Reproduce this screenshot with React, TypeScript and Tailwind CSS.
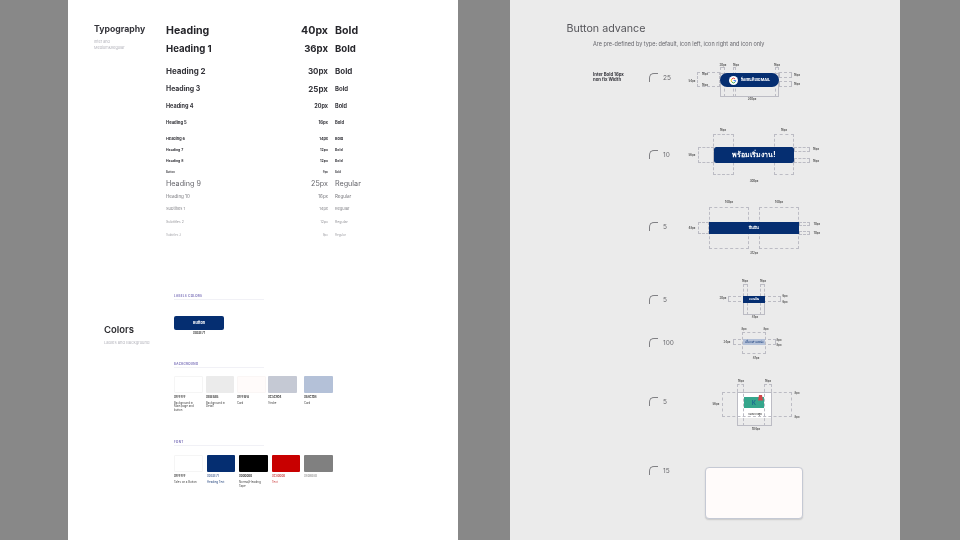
import type { ReactNode } from "react";

const inter = { fontFamily: "Inter, 'Noto Sans', sans-serif" };

type TypeRow = {
	name: string;
	size: string;
	weight: string;
	gap: number;
	text: string;
	sizeText?: string;
	weightText?: string;
};

const typeRows: TypeRow[] = [
	{ name: "Heading", size: "40px", weight: "Bold", gap: 4, text: "text-[10.6px] font-bold text-[#26262b]" },
	{ name: "Heading 1", size: "36px", weight: "Bold", gap: 6, text: "text-[9.6px] font-bold text-[#26262b]" },
	{ name: "Heading 2", size: "30px", weight: "Bold", gap: 10, text: "text-[8px] font-bold text-[#34343a]" },
	{ name: "Heading 3", size: "25px", weight: "Bold", gap: 6, text: "text-[6.9px] font-bold text-[#34343a]", sizeText: "text-[8px]", weightText: "text-[6px]" },
	{ name: "Heading 4", size: "20px", weight: "Bold", gap: 6, text: "text-[5.5px] font-bold text-[#34343a]" },
	{ name: "Heading 5", size: "16px", weight: "Bold", gap: 4, text: "text-[4.2px] font-bold text-[#34343a]" },
	{ name: "Heading 6", size: "14px", weight: "Bold", gap: 4, text: "text-[3.8px] font-bold text-[#34343a]" },
	{ name: "Heading 7", size: "12px", weight: "Bold", gap: -0.5, text: "text-[3.5px] font-bold text-[#34343a]" },
	{ name: "Heading 8", size: "12px", weight: "Bold", gap: -0.5, text: "text-[3.5px] font-bold text-[#34343a]" },
	{ name: "Button", size: "9px", weight: "Bold", gap: -2, text: "text-[2.8px] font-bold text-[#44444a]" },
	{ name: "Heading 9", size: "25px", weight: "Regular", gap: 0, text: "text-[7.2px] text-[#66666c]" },
	{ name: "Heading 10", size: "16px", weight: "Regular", gap: 1, text: "text-[4.5px] text-[#77777c]" },
	{ name: "Subtitles 1", size: "14px", weight: "Regular", gap: 0, text: "text-[4px] text-[#85858a]" },
	{ name: "Subtitles 2", size: "12px", weight: "Regular", gap: 1.5, text: "text-[3.6px] text-[#97979c]" },
	{ name: "Subtitles 3", size: "9px", weight: "Regular", gap: 0.5, text: "text-[3px] text-[#a5a5aa]" },
];

type Swatch = {
	color: string;
	hex: string;
	hexColor?: string;
	desc: string[];
	descColor?: string;
	width: string;
	gap: string;
};

const backgrounds: Swatch[] = [
	{ color: "bg-white border border-[#f5f5f5]", hex: "#FFFFFF", desc: ["Background in", "Main page and", "button"], width: "w-[29px]", gap: "mr-[3px]" },
	{ color: "bg-[#EBEBEB]", hex: "#EBEBEB", desc: ["Background in", "Detail"], width: "w-[28px]", gap: "mr-[3px]" },
	{ color: "bg-[#FFFBFA] border border-[#faf6f5]", hex: "#FFFBFA", desc: ["Card"], width: "w-[29px]", gap: "mr-[2px]" },
	{ color: "bg-[#C5C9D4]", hex: "#C5C9D4", desc: ["Stroke"], width: "w-[29px]", gap: "mr-[7px]" },
	{ color: "bg-[#B4C1D8]", hex: "#B4C1D8", desc: ["Card"], width: "w-[29px]", gap: "" },
];

const fonts: Swatch[] = [
	{ color: "bg-white border border-[#f5f5f5]", hex: "#FFFFFF", desc: ["Tales on a Button"], width: "w-[29px]", gap: "mr-[4px]" },
	{ color: "bg-[#052E71]", hex: "#052E71", hexColor: "text-[#5a72a0]", desc: ["Heading Text"], descColor: "text-[#2a4a80]", width: "w-[28px]", gap: "mr-[4px]" },
	{ color: "bg-black", hex: "#000000", desc: ["Normal/Heading", "Tape"], width: "w-[29px]", gap: "mr-[4px]" },
	{ color: "bg-[#C80000]", hex: "#C80000", hexColor: "text-[#d05050]", desc: ["Text"], descColor: "text-[#c83030]", width: "w-[28px]", gap: "mr-[4px]" },
	{ color: "bg-[#808080]", hex: "#808080", hexColor: "text-[#a0a0a0]", desc: [], width: "w-[29px]", gap: "" },
];

function SwatchRow({ items }: { items: Swatch[] }) {
	return (
		<div className="flex">
			{items.map((item) => (
				<div key={item.hex} className={`${item.width} ${item.gap}`}>
					<div className={`h-[17px] rounded-[1px] ${item.color}`} />
					<div className={`mt-[2px] text-[2.8px] font-bold leading-[4px] ${item.hexColor ?? "text-[#333]"}`}>
						{item.hex}
					</div>
					<div className={`mt-[3px] text-[2.8px] leading-[3.4px] ${item.descColor ?? "text-[#444]"}`}>
						{item.desc.map((line) => (
							<div key={line}>{line}</div>
						))}
					</div>
				</div>
			))}
		</div>
	);
}

function SectionLabel({ children }: { children: string }) {
	return (
		<div className="w-[90px] border-b border-[#f1f1f6] pb-[1px] text-[3px] font-semibold leading-[4px] tracking-[0.3px] text-[#6a5fb0]">
			{children}
		</div>
	);
}

function TypographyBlock() {
	return (
		<div className="flex h-[292px] shrink-0 pl-[26px] pt-[21px]">
			<div className="w-[72px]">
				<div className="text-[8.7px] font-bold leading-[16px] text-[#34343a]">Typography</div>
				<div className="mt-[2px] text-[3.8px] leading-[6px] text-[#b4b4bc]">
					Inter and
					<br />
					Medium&Regular
				</div>
			</div>
			<div className="w-[200px]">
				{typeRows.map((row) => (
					<div
						key={row.name}
						className={`flex h-[12px] items-center whitespace-nowrap leading-none ${row.text}`}
						style={{ marginTop: row.gap }}
					>
						<span className="w-[110px]">{row.name}</span>
						<span className={`w-[52px] text-right ${row.sizeText ?? ""}`}>{row.size}</span>
						<span className={`ml-[7px] ${row.weightText ?? ""}`}>{row.weight}</span>
					</div>
				))}
			</div>
		</div>
	);
}

function ColorsBlock() {
	return (
		<div className="flex pt-[2px]">
			<div className="w-[106px] pl-[36px] pt-[30px]">
				<div className="text-[9.5px] font-semibold leading-[12px] text-[#2c2c30]">Colors</div>
				<div className="mt-[4px] whitespace-nowrap text-[4.1px] leading-[6px] text-[#b4b4bc]">Lables and Background</div>
			</div>
			<div className="w-[165px]">
				<SectionLabel>LABELS COLORS</SectionLabel>
				<div className="mt-[16px] flex h-[14px] w-[50px] items-center justify-center rounded-[2px] bg-[#052E71] text-[3.8px] font-bold text-white">
					Button
				</div>
				<div className="mt-[1px] w-[50px] text-center text-[2.8px] font-bold leading-[4px] text-[#333]">#052E71</div>
				<div className="mt-[27px]">
					<SectionLabel>BACKGROUND</SectionLabel>
				</div>
				<div className="mt-[8px]">
					<SwatchRow items={backgrounds} />
				</div>
				<div className="mt-[28px]">
					<SectionLabel>FONT</SectionLabel>
				</div>
				<div className="mt-[9px]">
					<SwatchRow items={fonts} />
				</div>
			</div>
		</div>
	);
}

// annotation marks on the spec canvas, x/y are read straight off the artboard
function Box({ x, y, w, h, solid }: { x: number; y: number; w: number; h: number; solid?: boolean }) {
	return (
		<div
			className={`absolute border-[0.5px] border-[#bcbcc4] ${solid ? "" : "border-dashed"}`}
			style={{ left: x - 510, top: y, width: w, height: h }}
		/>
	);
}

function Dim({ x, y, children }: { x: number; y: number; children: string }) {
	return (
		<span
			className="absolute -translate-x-1/2 -translate-y-1/2 whitespace-nowrap text-[2.8px] font-semibold text-[#444]"
			style={{ left: x - 510, top: y }}
		>
			{children}
		</span>
	);
}

function Btn({ x, y, w, h, className, children }: { x: number; y: number; w: number; h: number; className: string; children: ReactNode }) {
	return (
		<div
			className={`absolute flex items-center justify-center whitespace-nowrap ${className}`}
			style={{ left: x - 510, top: y, width: w, height: h }}
		>
			{children}
		</div>
	);
}

function SpecRow({ top, height, radius, note, children }: { top: number; height: number; radius: string; note?: ReactNode; children: ReactNode }) {
	return (
		<div className="relative flex items-start pl-[83px]" style={{ height }}>
			<div className="-mt-[1px] w-[55.5px] shrink-0 text-[4.3px] font-bold leading-[5px] text-[#33333a]">{note}</div>
			<div className="h-[9px] w-[9px] shrink-0 rounded-tl-[5px] border-l border-t border-[#808084]" />
			<span className="ml-[5.5px] text-[6.5px] leading-[11px] text-[#6a6a6e]">{radius}</span>
			{/* shift the canvas layer back so children can use artboard coordinates */}
			<div className="absolute left-0 w-full" style={{ top: -top }}>
				{children}
			</div>
		</div>
	);
}

function GoogleMark() {
	return (
		<svg viewBox="0 0 24 24" className="h-[9px] w-[9px]">
			<circle cx="12" cy="12" r="12" fill="#fff" />
			<path d="M7.2 8.4A6 6 0 0 1 16.2 7.7" fill="none" stroke="#ea4335" strokeWidth="2.6" />
			<path d="M7.2 15.6a6 6 0 0 1 0-7.2" fill="none" stroke="#fbbc05" strokeWidth="2.6" />
			<path d="M16.5 16a6 6 0 0 1-9.3-.4" fill="none" stroke="#34a853" strokeWidth="2.6" />
			<path d="M12 12h6a6 6 0 0 1-1.5 4" fill="none" stroke="#4285f4" strokeWidth="2.6" />
		</svg>
	);
}

function SpecPanel() {
	return (
		<section className="h-full w-[390px] shrink-0 bg-[#EBEBEB]">
			<div className="h-[73px]">
				<div className="pl-[56.5px] pt-[21px] text-[10.7px] leading-[16px] text-[#55555a]">Button advance</div>
				<div className="pl-[83px] pt-[3.5px] text-[5.5px] leading-[7px] text-[#66666c]">
					Are pre-defined by type: default, icon left, icon right and icon only
				</div>
			</div>

			<SpecRow
				top={73}
				height={77}
				radius="25"
				note={
					<>
						Inter Bold 16px
						<br />
						non fix Width
					</>
				}
			>
				<Box x={697} y={72} w={23} h={15} />
				<Box x={720} y={67} w={5} h={30} />
				<Box x={733} y={67} w={3} h={30} />
				<Box x={775} y={67} w={4} h={30} />
				<Box x={720} y={73} w={59} h={24} solid />
				<Box x={779} y={72} w={13} h={6} />
				<Box x={779} y={81} w={13} h={6} />
				<Btn x={720} y={73} w={59} h={14} className="gap-[3px] rounded-[7px] bg-[#052E71] text-[3.8px] font-bold text-white">
					<GoogleMark />
					<span>ล็อกอินด้วยGMAIL</span>
				</Btn>
				<Dim x={723} y={65}>20px</Dim>
				<Dim x={736} y={65}>16px</Dim>
				<Dim x={777} y={65}>16px</Dim>
				<Dim x={692} y={81}>54px</Dim>
				<Dim x={705} y={74}>16px</Dim>
				<Dim x={705} y={85}>16px</Dim>
				<Dim x={797} y={75}>16px</Dim>
				<Dim x={797} y={84}>16px</Dim>
				<Dim x={752} y={99}>240px</Dim>
			</SpecRow>

			<SpecRow top={150} height={72} radius="10">
				<Box x={698} y={147} w={16} h={16} />
				<Box x={713} y={134} w={21} h={41} />
				<Box x={774} y={134} w={20} h={41} />
				<Box x={794} y={147} w={16} h={5} />
				<Box x={794} y={158} w={16} h={5} />
				<Btn x={714} y={147} w={80} h={16} className="rounded-[2.5px] bg-[#052E71] text-[7px] font-bold text-white">
					พร้อมเริ่มงาน!
				</Btn>
				<Dim x={723} y={130}>16px</Dim>
				<Dim x={784} y={130}>16px</Dim>
				<Dim x={692} y={155}>56px</Dim>
				<Dim x={816} y={149}>16px</Dim>
				<Dim x={816} y={161}>16px</Dim>
				<Dim x={754} y={181}>300px</Dim>
			</SpecRow>

			<SpecRow top={222} height={73} radius="5">
				<Box x={698} y={222} w={11} h={12} />
				<Box x={709} y={207} w={40} h={42} />
				<Box x={759} y={207} w={40} h={42} />
				<Box x={799} y={222} w={11} h={4} />
				<Box x={799} y={231} w={11} h={4} />
				<Btn x={709} y={222} w={90} h={12} className="bg-[#052E71] text-[4.2px] font-bold text-white">
					ยืนยัน
				</Btn>
				<Dim x={729} y={202}>140px</Dim>
				<Dim x={779} y={202}>140px</Dim>
				<Dim x={692} y={228}>48px</Dim>
				<Dim x={817} y={224}>10px</Dim>
				<Dim x={817} y={233}>10px</Dim>
				<Dim x={754} y={253}>312px</Dim>
			</SpecRow>

			<SpecRow top={295} height={43} radius="5">
				<Box x={728} y={296} w={53} h={6} />
				<Box x={743} y={284} w={5} h={31} />
				<Box x={760} y={284} w={5} h={31} />
				<Box x={743} y={296} w={22} h={19} solid />
				<Btn x={743} y={296} w={22} h={6.5} className="bg-[#052E71] text-[3px] font-bold text-white">
					ถอนเงิน
				</Btn>
				<Dim x={745} y={281}>16px</Dim>
				<Dim x={763} y={281}>16px</Dim>
				<Dim x={723} y={298}>20px</Dim>
				<Dim x={785} y={296}>6px</Dim>
				<Dim x={785} y={302}>6px</Dim>
				<Dim x={755} y={317}>81px</Dim>
			</SpecRow>

			<SpecRow top={338} height={59} radius="100">
				<Box x={733} y={339} w={43} h={6} />
				<Box x={742} y={332} w={24} h={22} />
				<Btn x={743} y={339} w={22} h={6} className="bg-[#B4C1D8] text-[3px] font-semibold text-[#3a5a90]">
					เลือกตำแหน่ง
				</Btn>
				<Dim x={744} y={329}>8px</Dim>
				<Dim x={766} y={329}>8px</Dim>
				<Dim x={727} y={342}>24px</Dim>
				<Dim x={779} y={340}>8px</Dim>
				<Dim x={779} y={345}>8px</Dim>
				<Dim x={756} y={358}>87px</Dim>
			</SpecRow>

			<SpecRow top={397} height={69} radius="5">
				<div className="absolute bg-white" style={{ left: 227, top: 392, width: 35, height: 26 }} />
				<div
					className="absolute flex items-center justify-center overflow-hidden bg-[#35a68c]"
					style={{ left: 234, top: 397, width: 20, height: 11 }}
				>
					<span className="text-[6px] font-bold leading-none text-[#1d6f8f]">K</span>
				</div>
				<svg viewBox="0 0 10 14" className="absolute h-[8px] w-[5px]" style={{ left: 248, top: 394 }}>
					<path d="M2 1h6l1 6 1 5H0l1-5z" fill="#d1484a" />
				</svg>
				<span
					className="absolute -translate-x-1/2 whitespace-nowrap text-[3.2px] font-semibold leading-[4px] text-[#444]"
					style={{ left: 244.5, top: 412 }}
				>
					รถบรรทุก
				</span>
				<Box x={722} y={392} w={70} h={25} />
				<Box x={737} y={384} w={7} h={42} />
				<Box x={764} y={384} w={8} h={42} />
				<Box x={737} y={392} w={35} h={34} solid />
				<Dim x={741} y={381}>16px</Dim>
				<Dim x={768} y={381}>16px</Dim>
				<Dim x={716} y={404}>56px</Dim>
				<Dim x={797} y={393}>8px</Dim>
				<Dim x={797} y={417}>8px</Dim>
				<Dim x={756} y={429}>104px</Dim>
			</SpecRow>

			<SpecRow top={466} height={74} radius="15">
				<div
					className="absolute rounded-[4px] border-[0.5px] border-[#c5c9d4] bg-[#FFFBFA] shadow-[0_1px_1.5px_rgba(0,0,0,0.15)]"
					style={{ left: 195, top: 467, width: 98, height: 52 }}
				/>
			</SpecRow>
		</section>
	);
}

export default function App() {
	return (
		<div className="flex h-[540px] w-[960px] overflow-hidden bg-[#888888] pl-[68px] blur-[0.35px]" style={inter}>
			<section className="flex h-full w-[390px] shrink-0 flex-col bg-white">
				<TypographyBlock />
				<ColorsBlock />
			</section>
			<div className="w-[52px] shrink-0" />
			<SpecPanel />
		</div>
	);
}
